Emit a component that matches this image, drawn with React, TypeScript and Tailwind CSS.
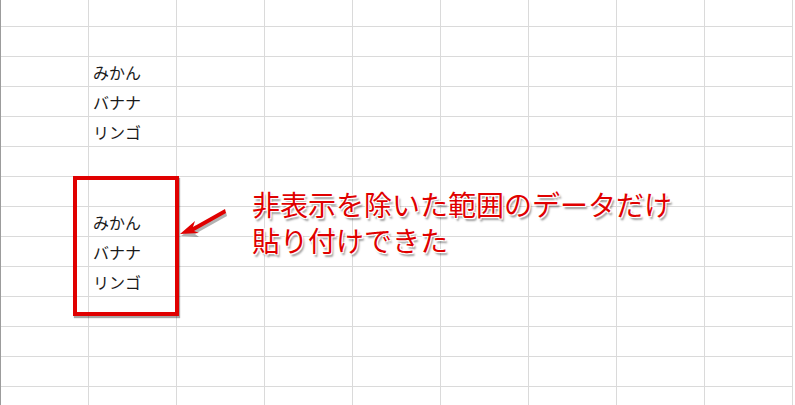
import React from "react";

const rows = [
  { h: "h-[27px]", text: "" },
  { h: "h-[30px]", text: "" },
  { h: "h-[30px]", text: "みかん" },
  { h: "h-[30px]", text: "バナナ" },
  { h: "h-[30px]", text: "リンゴ" },
  { h: "h-[30px]", text: "" },
  { h: "h-[30px]", text: "" },
  { h: "h-[30px]", text: "みかん" },
  { h: "h-[30px]", text: "バナナ" },
  { h: "h-[30px]", text: "リンゴ" },
  { h: "h-[30px]", text: "" },
  { h: "h-[30px]", text: "" },
  { h: "h-[30px]", text: "" },
  { h: "h-[30px]", text: "" },
];

const cols = [0, 1, 2, 3, 4, 5, 6, 7, 8];

const App = () => {
  return (
    <div className="relative w-[795px] h-[405px] overflow-hidden bg-white font-['Noto_Sans_CJK_JP',sans-serif]">
      <div className="flex flex-col border-l border-[#9c9c9c] w-full">
        {rows.map((row, i) => (
          <div key={i} className={`flex ${row.h} shrink-0`}>
            {cols.map((c) => (
              <div
                key={c}
                className="w-[88px] shrink-0 border-r border-b border-[#dadada] flex items-center pl-[4px] text-[16px] text-[#1a1a1a]"
              >
                {c === 1 ? row.text : ""}
              </div>
            ))}
          </div>
        ))}
      </div>

      {/* highlight box */}
      <div className="absolute left-[73px] top-[176px] w-[106px] h-[140px] border-[4px] border-[#e00000] shadow-[1px_2px_1px_rgba(0,0,0,0.35)]" />

      {/* arrow */}
      <svg className="absolute left-[176px] top-[204px]" width="60" height="40" viewBox="0 0 60 40">
        <g transform="translate(1,2)" fill="#000" opacity="0.3">
          <path d="M49 6 L17 24 L19 19 L4 30 L22 31 L18 28 L50 10 Z" />
        </g>
        <path d="M49 5 L17 23 L19 17 L4 30 L23 29 L18 27 L50 9 Z" fill="#e00000" />
      </svg>

      {/* annotation */}
      <div className="absolute left-[252px] top-[186px] text-[28px] leading-[36px] text-[#e00000] font-['Noto_Sans_CJK_JP',sans-serif] [text-shadow:_-1px_-1px_0_#fff,_1px_-1px_0_#fff,_-1px_1px_0_#fff,_1px_1px_0_#fff,_2px_3px_2px_rgba(0,0,0,0.4)]">
        <div>非表示を除いた範囲のデータだけ</div>
        <div>貼り付けできた</div>
      </div>
    </div>
  );
};

export default App;
